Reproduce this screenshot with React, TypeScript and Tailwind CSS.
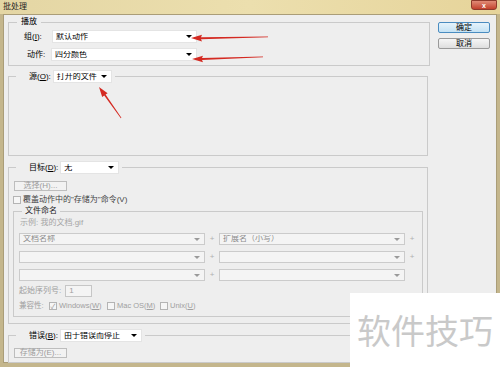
const FONT = "font-['Liberation_Sans','Noto_Sans_CJK_SC',sans-serif]";

function Arrow({ grey }: { grey?: boolean }) {
  return (
    <span
      className={`mr-[4px] h-0 w-0 border-x-[3px] border-t-[3px] border-x-transparent ${
        grey ? "border-t-[#9a9a9a]" : "border-t-black"
      }`}
    />
  );
}

function Sel({ text, className, off }: { text?: string; className: string; off?: boolean }) {
  return (
    <div
      className={`flex items-center border ${
        off ? "border-[#cbcbcb] bg-[#f4f4f4] text-[#8c8c8c]" : "border-[#e4e4e4] bg-white text-black"
      } ${className}`}
    >
      <span className="flex-1 truncate pl-[3px] leading-none">{text}</span>
      <Arrow grey={off} />
    </div>
  );
}

function Box({ checked }: { checked?: boolean }) {
  return (
    <span className="flex h-[8px] w-[8px] items-center justify-center border border-[#b4b4b4] bg-[#f6f6f6] text-[7px] leading-none text-[#9a9a9a]">
      {checked ? "✓" : ""}
    </span>
  );
}

function GreyBtn({ children }: { children: React.ReactNode }) {
  return (
    <div className="flex h-[10px] w-[53px] items-center justify-center border border-[#bdbdbd] bg-[#f2f2f2] leading-none text-[#9c9c9c]">
      {children}
    </div>
  );
}

function NameRow({ a, b, last }: { a?: string; b?: string; last?: boolean }) {
  return (
    <div className="flex h-[12px] items-center">
      <Sel off text={a} className="h-[12px] w-[186px]" />
      <span className="w-[14px] text-center leading-none text-[#b0b0b0]">+</span>
      <Sel off text={b} className="h-[12px] w-[186px]" />
      {!last && <span className="w-[14px] text-center leading-none text-[#b0b0b0]">+</span>}
    </div>
  );
}

export default function App() {
  return (
    <div className={`relative h-[367px] w-[500px] overflow-hidden bg-[#c4b68c] text-[8px] text-black ${FONT}`}>
      {/* title bar */}
      <div className="flex h-[14px] items-start justify-between bg-gradient-to-r from-[#e4d6a4] via-[#ecdfae] to-[#e6d49a]">
        <span className="pl-[3px] pt-[2px] leading-[10px] text-[#1d1d1d]">批处理</span>
        <div className="mr-[3px] flex h-[10px] w-[26px] items-center justify-center rounded-b-[3px] border border-[#8e3a2c] bg-gradient-to-b from-[#e08a76] to-[#c2402c] text-[7px] font-bold leading-none text-white">
          x
        </div>
      </div>

      {/* client */}
      <div className="mx-[3px] flex h-[349px] border border-[#aa9d78] bg-[#eeeeee]">
        <div className="flex w-[426px] flex-col pl-[4px] pt-[2px]">
          {/* 播放 */}
          <fieldset className="w-[422px] border border-[#cacaca] p-0">
            <legend className="ml-[8px] px-[4px] leading-[10px]">播放</legend>
            <div className="flex flex-col gap-[5px] pb-[4px] pl-[14px] pt-[3px]">
              <div className="flex items-center">
                <span className="w-[29px] pl-[1px] leading-none">
                  组(<span className="underline">I</span>):
                </span>
                <Sel text="默认动作" className="h-[13px] w-[145px]" />
              </div>
              <div className="flex items-center">
                <span className="w-[28px] pl-[4px] leading-none">动作:</span>
                <Sel text="四分颜色" className="h-[13px] w-[146px]" />
              </div>
            </div>
          </fieldset>

          {/* 源 */}
          <fieldset className="mt-[4px] w-[420px] border border-[#cacaca] p-0">
            <legend className="ml-[7px] flex items-center gap-[2px] pl-[13px] pr-[3px]">
              <span className="leading-none">
                源(<span className="underline">O</span>):
              </span>
              <Sel text="打开的文件" className="h-[13px] w-[59px]" />
            </legend>
            <div className="h-[72px]" />
          </fieldset>

          {/* 目标 */}
          <fieldset className="mt-[5px] w-[420px] border border-[#cacaca] p-0">
            <legend className="ml-[7px] flex items-center gap-[2px] pl-[13px] pr-[3px]">
              <span className="leading-none">
                目标(<span className="underline">D</span>):
              </span>
              <Sel text="无" className="h-[13px] w-[59px]" />
            </legend>
            <div className="flex flex-col pb-[6px] pl-[4px] pt-[7px]">
              <div className="pl-[1px]">
                <GreyBtn>选择(H)...</GreyBtn>
              </div>
              <div className="mt-[5px] flex h-[8px] items-center gap-[2px]">
                <Box />
                <span className="leading-none text-[#444]">覆盖动作中的"存储为"命令(V)</span>
              </div>
              <fieldset className="mt-[2px] w-[410px] border border-[#cacaca] p-0">
                <legend className="ml-[8px] px-[3px] leading-[10px] text-[#222]">文件命名</legend>
                <div className="flex flex-col pb-[5px] pl-[5px] pt-[2px]">
                  <span className="h-[10px] pl-[1px] leading-[10px] text-[#a5a5a5]">示例: 我的文档.gif</span>
                  <div className="mt-[5px] flex flex-col gap-[6px]">
                    <NameRow a="文档名称" b="扩展名（小写）" />
                    <NameRow />
                    <NameRow last />
                  </div>
                  <div className="mt-[4px] flex h-[12px] items-center gap-[4px] text-[#a0a0a0]">
                    <span className="leading-none">起始序列号:</span>
                    <div className="flex h-[12px] w-[27px] items-center border border-[#c6c6c6] bg-[#f4f4f4] pl-[3px] leading-none">
                      1
                    </div>
                  </div>
                  <div className="mt-[4px] flex h-[10px] items-center text-[7.5px] text-[#a0a0a0]">
                    <span className="w-[30px] leading-none">兼容性:</span>
                    <Box checked />
                    <span className="ml-[2px] w-[48px] leading-none">
                      Windows(<span className="underline">W</span>)
                    </span>
                    <Box />
                    <span className="ml-[2px] w-[43px] leading-none">
                      Mac OS(<span className="underline">M</span>)
                    </span>
                    <Box />
                    <span className="ml-[2px] leading-none">
                      Unix(<span className="underline">U</span>)
                    </span>
                  </div>
                </div>
              </fieldset>
            </div>
          </fieldset>

          {/* 错误 */}
          <fieldset className="mt-[5px] w-[420px] border border-[#cacaca] p-0">
            <legend className="ml-[7px] flex items-center gap-[2px] pl-[13px] pr-[3px]">
              <span className="leading-none">
                错误(<span className="underline">B</span>):
              </span>
              <Sel text="由于错误而停止" className="h-[13px] w-[82px]" />
            </legend>
            <div className="pb-[4px] pl-[5px] pt-[6px]">
              <GreyBtn>存储为(E)...</GreyBtn>
            </div>
          </fieldset>
        </div>

        {/* buttons */}
        <div className="flex flex-col gap-[5px] pl-[8px] pt-[7px]">
          <div className="flex h-[11px] w-[52px] items-center justify-center rounded-[2px] border border-[#4a8cc0] bg-gradient-to-b from-[#e6f3fb] to-[#c4e2f4] leading-none">
            确定
          </div>
          <div className="flex h-[11px] w-[52px] items-center justify-center rounded-[2px] border border-[#9a9a9a] bg-gradient-to-b from-[#f6f6f6] to-[#dedede] leading-none">
            取消
          </div>
        </div>
      </div>

      {/* red annotation arrows */}
      <svg className="pointer-events-none absolute left-0 top-0" width="500" height="367">
        <g fill="#d42a22">
          <polygon points="191,38 202,34.8 201,37.2 268,36.6 268,37.3 201,39.2 202,41.4" />
          <polygon points="192,59 203,55.8 202,58.1 263,56.6 263,57.3 202,60 203,62.3" />
          <polygon points="99,87 107.6,93.3 105.6,94.6 121.4,117.8 120.8,118.2 104.2,95.6 102.2,97.1" />
        </g>
      </svg>

      {/* watermark */}
      <div className="absolute left-[350px] top-[293px] flex h-[74px] w-[150px] items-center justify-center bg-white">
        <span className="font-['Noto_Sans_CJK_SC',sans-serif] text-[34px] leading-none text-[#c9c9c9]">
          软件技巧
        </span>
      </div>
    </div>
  );
}
